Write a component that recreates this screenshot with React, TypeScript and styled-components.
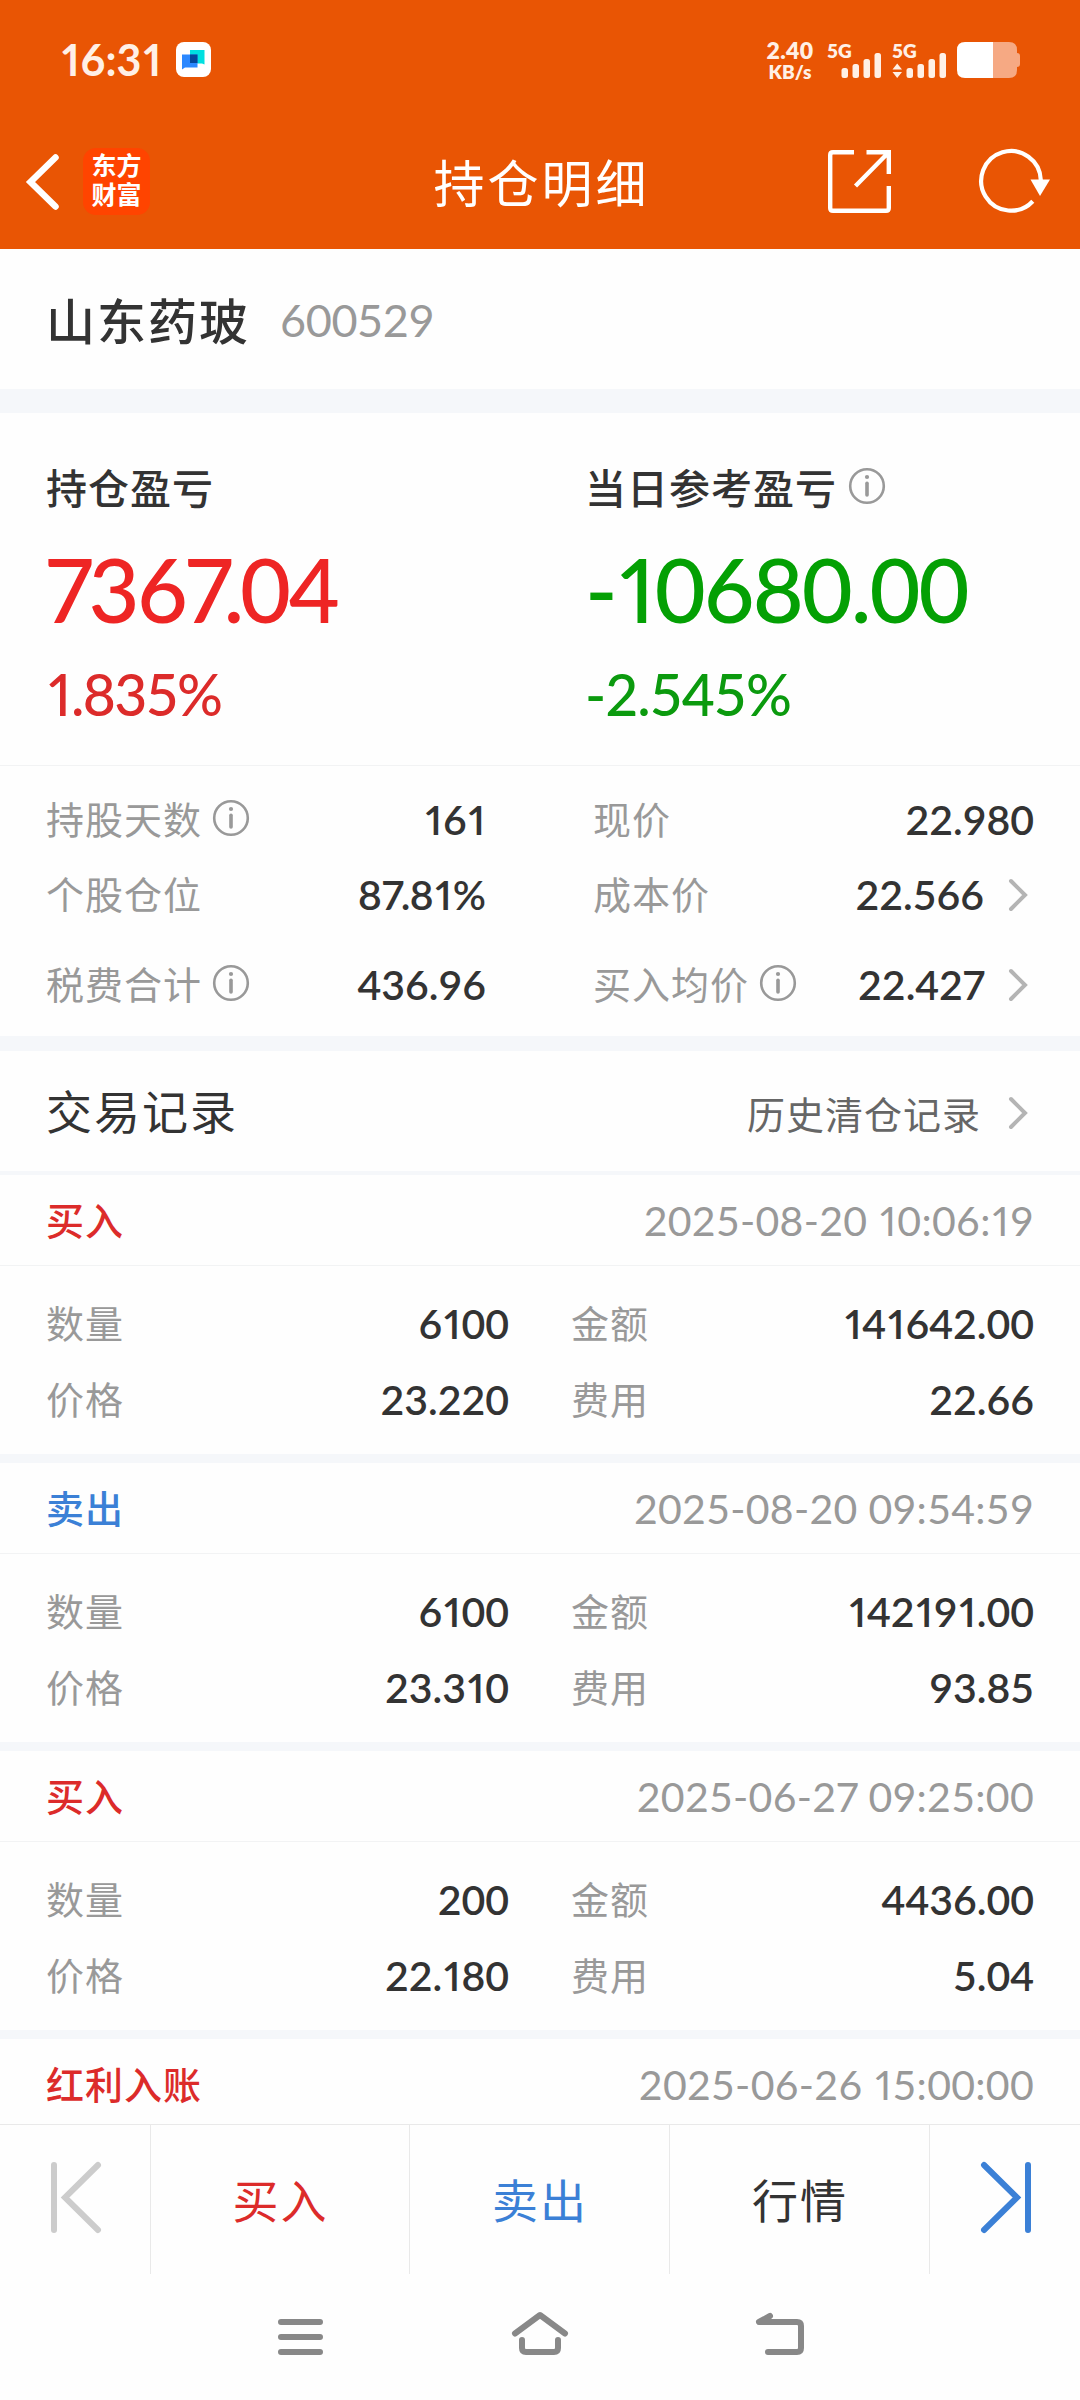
import React from "react";
import styled, { createGlobalStyle } from "styled-components";

const GlobalStyle = createGlobalStyle`
  * { box-sizing: border-box; }
  html, body { margin: 0; padding: 0; }
  body { background: #fefefe; }
`;

const cjk = `"Noto Sans CJK SC", sans-serif`;
const latin = `Lato, "Noto Sans CJK SC", sans-serif`;

const Screen = styled.div`
  width: 1080px;
  height: 2400px;
  display: flex;
  flex-direction: column;
  overflow: hidden;
  background: #fefefe;
  color: #333;
  font-family: ${cjk};
  line-height: 1;
`;

const Icon = styled.svg`
  display: block;
  flex: none;
  overflow: visible;
`;

type NumStyle = { $size: number; $weight?: number; $gap?: number; $color?: string };

const NumText = styled.span<NumStyle>`
  font-family: ${latin};
  font-size: ${(p) => p.$size}px;
  font-weight: ${(p) => p.$weight ?? 400};
  letter-spacing: ${(p) => p.$gap ?? 0}px;
  color: ${(p) => p.$color ?? "inherit"};
  line-height: 1;
  white-space: nowrap;
`;

/* one and seven keep their own narrow width, the other digits are tabular */
const One = styled.span`
  font-feature-settings: "pnum" 1;
  margin: 0 0.02em 0 0.045em;
`;

const Seven = styled.span`
  font-feature-settings: "pnum" 1;
  margin-right: -0.02em;
`;

const Num = ({ children, ...rest }: NumStyle & { children: string }) => (
  <NumText {...rest}>
    {children.split(/(1|7\.?)/).map((part, i) => {
      if (part === "1") return <One key={i}>{part}</One>;
      if (part.startsWith("7")) return <Seven key={i}>{part}</Seven>;
      return part;
    })}
  </NumText>
);

/* ---------- header ---------- */

const Top = styled.header`
  height: 249px;
  flex: none;
  background: #e95504;
  color: #fff;
`;

const StatusBar = styled.div`
  height: 119px;
  padding: 0 59px 0 60px;
  display: flex;
  align-items: center;
  justify-content: space-between;
`;

const StatusGroup = styled.div`
  display: flex;
  align-items: center;
`;

const Clock = styled.div`
  width: 116px;
  padding-bottom: 1px;
  color: #fff0e6;
`;

const Speed = styled.div`
  width: 52px;
  margin-right: 11px;
  display: flex;
  flex-direction: column;
  align-items: center;
  color: #fff0e6;
`;

const SignalBox = styled.div`
  width: 65px;
  height: 38px;
  color: #fff0e6;
  display: grid;
  & > * { grid-area: 1 / 1; }
`;

const NavBar = styled.div`
  height: 125px;
  padding: 0 28px 0 26px;
  display: grid;
  grid-template-columns: 1fr auto 1fr;
  align-items: center;
`;

const NavSide = styled.div<{ $end?: boolean }>`
  display: flex;
  align-items: center;
  gap: ${(p) => (p.$end ? 88 : 23)}px;
  justify-content: ${(p) => (p.$end ? "flex-end" : "flex-start")};
`;

const Logo = styled.div`
  width: 67px;
  height: 67px;
  border-radius: 13px;
  background: #ff4400;
  font-family: "Liberation Sans", "Noto Sans CJK SC", sans-serif;
  font-size: 25px;
  font-weight: 700;
  line-height: 29px;
  text-align: center;
  padding-top: 4px;
`;

const Title = styled.h1`
  margin: 0;
  padding: 0 0 2px 5px;
  font-size: 51px;
  font-weight: 400;
  letter-spacing: 3px;
  line-height: 60px;
`;

/* ---------- summary ---------- */

const Band = styled.div<{ $h: number }>`
  flex: none;
  height: ${(p) => p.$h}px;
  background: #f5f7fa;
`;

const StockRow = styled.section`
  flex: none;
  height: 140px;
  padding: 0 46px;
  display: flex;
  align-items: center;
  gap: 30px;
`;

const StockName = styled.h2`
  margin: 0;
  padding-bottom: 1px;
  font-size: 49px;
  font-weight: 500;
  letter-spacing: 2px;
`;

const StockCode = styled.div`
  padding-top: 2px;
  color: #999;
`;

const Profit = styled.section`
  flex: none;
  height: 353px;
  padding: 46px 46px 0;
  display: grid;
  grid-template-columns: 539px 1fr;
  border-bottom: 1px solid #f2f3f4;
`;

const ProfitCol = styled.div`
  display: flex;
  flex-direction: column;
`;

const ProfitLabel = styled.div`
  height: 54px;
  display: flex;
  align-items: center;
  gap: 12px;
  font-size: 41px;
  font-weight: 500;
  letter-spacing: 1px;
`;

const ProfitBig = styled.div<{ $color: string }>`
  height: 151px;
  display: flex;
  align-items: center;
  color: ${(p) => p.$color};
`;

const ProfitPct = styled.div<{ $color: string }>`
  height: 60px;
  display: flex;
  align-items: center;
  color: ${(p) => p.$color};
`;

const Facts = styled.section`
  flex: none;
  height: 270px;
  padding: 16px 46px 0;
  display: grid;
  grid-template-columns: 440px 441px;
  grid-template-rows: 75px 75px 105px;
  column-gap: 107px;
`;

const Fact = styled.div`
  display: flex;
  align-items: center;
  justify-content: space-between;
`;

const FactName = styled.div`
  padding-bottom: 3px;
  display: flex;
  align-items: center;
  gap: 11px;
  font-size: 38px;
  letter-spacing: 1px;
  color: #999;
`;

const FactValue = styled.div`
  display: flex;
  align-items: center;
  gap: 25px;
  & > svg { margin-right: 7px; }
`;

/* ---------- records ---------- */

const RecordsHead = styled.section`
  flex: none;
  height: 120px;
  padding: 3px 53px 0 46px;
  display: flex;
  align-items: center;
  justify-content: space-between;
`;

const RecordsTitle = styled.h2`
  margin: 0;
  padding-bottom: 7px;
  font-size: 46px;
  font-weight: 400;
  letter-spacing: 2px;
`;

const HistoryLink = styled.div`
  display: flex;
  align-items: center;
  gap: 28px;
  font-size: 38px;
  letter-spacing: 1px;
  color: #666;
`;

const List = styled.section`
  flex: 1;
  min-height: 0;
  overflow: hidden;
`;

const RecordHead = styled.div`
  height: 91px;
  padding: 0 46px;
  display: flex;
  align-items: center;
  justify-content: space-between;
  border-bottom: 1px solid #f2f3f4;
`;

const Kind = styled.span<{ $color: string }>`
  padding-bottom: 2px;
  font-size: 38px;
  font-weight: 500;
  letter-spacing: 1px;
  color: ${(p) => p.$color};
`;

const RecordBody = styled.div`
  height: 188px;
  padding: 19px 46px 0;
  display: grid;
  grid-template-columns: 463px 463px;
  grid-auto-rows: 76px;
  column-gap: 62px;
`;

/* ---------- bottom ---------- */

const ActionBar = styled.footer`
  flex: none;
  height: 150px;
  display: grid;
  grid-template-columns: 150px 259px 260px 260px 151px;
  border-top: 1px solid #e9e9e9;
`;

const Action = styled.div<{ $color?: string }>`
  display: flex;
  align-items: center;
  justify-content: center;
  padding: 0 0 4px 1px;
  font-size: 46px;
  letter-spacing: 2px;
  color: ${(p) => p.$color ?? "#333"};
  & + & { border-left: 1px solid #e9e9e9; }
`;

const SystemNav = styled.nav`
  flex: none;
  height: 126px;
  padding-bottom: 6px;
  display: grid;
  grid-template-columns: repeat(3, 240px);
  justify-content: center;
  align-items: center;
  justify-items: center;
`;

const Info = () => (
  <Icon width="36" height="36" viewBox="0 0 36 36" fill="none" stroke="#999">
    <circle cx="18" cy="18" r="16.8" strokeWidth="2.6" />
    <path d="M18 15.2V27" strokeWidth="3.6" strokeLinecap="round" />
    <circle cx="18" cy="9" r="2.1" fill="#999" stroke="none" />
  </Icon>
);

const Chevron = () => (
  <Icon width="18" height="32" viewBox="0 0 18 32" fill="none" stroke="#b4b4b4" strokeWidth="4" strokeLinecap="round">
    <path d="M2 2L16 16L2 30" />
  </Icon>
);

const Signal = ({ data }: { data?: boolean }) => (
  <SignalBox>
    <Num $size={19} $weight={800}>5G</Num>
    <Icon width="63" height="38" viewBox="0 0 63 38" fill="currentColor">
      {data && <path d="M5.2 22.5L10 28.5H0.5ZM5.2 37L0.5 31H10Z" />}
      <rect x="14.5" y="27" width="6.5" height="10" rx="2.5" />
      <rect x="25.5" y="23" width="6.5" height="14" rx="2.5" />
      <rect x="36.5" y="18" width="6.5" height="19" rx="2.5" />
      <rect x="47.5" y="12" width="6.5" height="25" rx="2.5" />
    </Icon>
  </SignalBox>
);

type FactItem = { name: string; value: string; info?: boolean; link?: boolean };

const facts: FactItem[] = [
  { name: "持股天数", value: "161", info: true },
  { name: "现价", value: "22.980" },
  { name: "个股仓位", value: "87.81%" },
  { name: "成本价", value: "22.566", link: true },
  { name: "税费合计", value: "436.96", info: true },
  { name: "买入均价", value: "22.427", info: true, link: true },
];

const RED = "#dc2b2a";
const BLUE = "#3b80d6";

const records = [
  { kind: "买入", color: RED, time: "2025-08-20 10:06:19", qty: "6100", amount: "141642.00", price: "23.220", fee: "22.66" },
  { kind: "卖出", color: BLUE, time: "2025-08-20 09:54:59", qty: "6100", amount: "142191.00", price: "23.310", fee: "93.85" },
  { kind: "买入", color: RED, time: "2025-06-27 09:25:00", qty: "200", amount: "4436.00", price: "22.180", fee: "5.04" },
  { kind: "红利入账", color: RED, time: "2025-06-26 15:00:00" },
];

const FactRow = ({ name, value, info, link }: FactItem) => (
  <Fact>
    <FactName>
      {name}
      {info && <Info />}
    </FactName>
    <FactValue>
      <Num $size={41} $weight={600}>{value}</Num>
      {link && <Chevron />}
    </FactValue>
  </Fact>
);

export default function App() {
  return (
    <Screen>
      <GlobalStyle />
      <Top>
        <StatusBar>
          <StatusGroup>
            <Clock><Num $size={43} $weight={700}>16:31</Num></Clock>
            <Icon width="35" height="35" viewBox="0 0 35 35">
              <rect width="35" height="35" rx="8" fill="#fff" />
              <path d="M14 8H28.5V22.5L26 21.5H14Z" fill="#00dfe0" />
              <path d="M6 12.5H21.5V25.5H9L6 27.5Z" fill="#2b88ff" />
              <rect x="14" y="12.5" width="7.5" height="8.5" fill="#04479a" />
            </Icon>
          </StatusGroup>
          <StatusGroup>
            <Speed>
              <Num $size={23} $weight={800} $gap={0.4}>2.40</Num>
              <Num $size={19} $weight={800}>KB/s</Num>
            </Speed>
            <Signal />
            <Signal data />
            <Icon width="64" height="36" viewBox="0 0 64 36">
              <path d="M36 0H52Q60 0 60 8V11Q63 11 63 14V22Q63 25 60 25V28Q60 36 52 36H36Z" fill="#f6a983" />
              <path d="M8 0H36V36H8Q0 36 0 28V8Q0 0 8 0Z" fill="#fff" />
            </Icon>
          </StatusGroup>
        </StatusBar>
        <NavBar>
          <NavSide>
            <Icon width="34" height="56" viewBox="0 0 34 56" fill="none" stroke="#fff" strokeWidth="6.5" strokeLinecap="round">
              <path d="M29.5 3.5L4.5 28L29.5 52.5" />
            </Icon>
            <Logo>东方<br />财富</Logo>
          </NavSide>
          <Title>持仓明细</Title>
          <NavSide $end>
            <Icon width="63" height="63" viewBox="0 0 63 63" fill="none" stroke="#fff" strokeWidth="4.4">
              <path d="M26 2.2H5Q2.2 2.2 2.2 5V58Q2.2 60.8 5 60.8H58Q60.8 60.8 60.8 58V36" />
              <path d="M38.5 2.2H60.8V24M60 3L27.5 36" />
            </Icon>
            <Icon width="73" height="64" viewBox="0 0 73 64" fill="none" stroke="#fff" strokeWidth="4.2">
              <path d="M53.8 51.2A29.8 29.8 0 1 1 61.8 30" />
              <path d="M51.5 29.5H71L61 46Z" fill="#fff" stroke="none" />
            </Icon>
          </NavSide>
        </NavBar>
      </Top>

      <StockRow>
        <StockName>山东药玻</StockName>
        <StockCode><Num $size={45} $gap={-0.4}>600529</Num></StockCode>
      </StockRow>
      <Band $h={24} />

      <Profit>
        <ProfitCol>
          <ProfitLabel>持仓盈亏</ProfitLabel>
          <ProfitBig $color="#ee2524"><Num $size={88} $weight={500} $gap={-2.5}>7367.04</Num></ProfitBig>
          <ProfitPct $color="#dc2b2a"><Num $size={57} $weight={500} $gap={-1.6}>1.835%</Num></ProfitPct>
        </ProfitCol>
        <ProfitCol>
          <ProfitLabel>当日参考盈亏<Info /></ProfitLabel>
          <ProfitBig $color="#04a004"><Num $size={88} $weight={500} $gap={-2}>-10680.00</Num></ProfitBig>
          <ProfitPct $color="#0b9a0e"><Num $size={57} $weight={500} $gap={-1}>-2.545%</Num></ProfitPct>
        </ProfitCol>
      </Profit>

      <Facts>
        {facts.map((f) => <FactRow key={f.name} {...f} />)}
      </Facts>
      <Band $h={15} />

      <RecordsHead>
        <RecordsTitle>交易记录</RecordsTitle>
        <HistoryLink>历史清仓记录<Chevron /></HistoryLink>
      </RecordsHead>
      <Band $h={4} />

      <List>
        {records.map((r) => (
          <React.Fragment key={r.time}>
            <RecordHead>
              <Kind $color={r.color}>{r.kind}</Kind>
              <Num $size={41} $gap={0.3} $color="#999">{r.time}</Num>
            </RecordHead>
            {r.qty && (
              <>
                <RecordBody>
                  <FactRow name="数量" value={r.qty} />
                  <FactRow name="金额" value={r.amount!} />
                  <FactRow name="价格" value={r.price!} />
                  <FactRow name="费用" value={r.fee!} />
                </RecordBody>
                <Band $h={9} />
              </>
            )}
          </React.Fragment>
        ))}
      </List>

      <ActionBar>
        <Action>
          <Icon width="50" height="71" viewBox="0 0 50 71" fill="none" stroke="#ccc" strokeWidth="6" strokeLinecap="round">
            <path d="M3 3V68M47 3L14 35.5L47 68" />
          </Icon>
        </Action>
        <Action $color={RED}>买入</Action>
        <Action $color={BLUE}>卖出</Action>
        <Action>行情</Action>
        <Action>
          <Icon width="50" height="71" viewBox="0 0 50 71" fill="none" stroke={BLUE} strokeWidth="6" strokeLinecap="round">
            <path d="M47 3V68M3 3L36 35.5L3 68" />
          </Icon>
        </Action>
      </ActionBar>
      <SystemNav>
        <Icon width="45" height="42" viewBox="0 0 45 42" fill="none" stroke="#888" strokeWidth="6" strokeLinecap="round">
          <path d="M3 9H42M3 24H42M3 39H42" />
        </Icon>
        <Icon width="56" height="42" viewBox="0 0 56 42" fill="none" stroke="#888" strokeWidth="6" strokeLinecap="round" strokeLinejoin="round">
          <path d="M3 20.5L28 2L53 20.5M10 27V35Q10 39 14 39H42Q46 39 46 35V27" />
        </Icon>
        <Icon width="48" height="42" viewBox="0 0 48 42" fill="none" stroke="#888" strokeWidth="6" strokeLinecap="round" strokeLinejoin="round">
          <path d="M14 3L3 9H41Q45 9 45 13V35Q45 39 41 39H12" />
        </Icon>
      </SystemNav>
    </Screen>
  );
}
